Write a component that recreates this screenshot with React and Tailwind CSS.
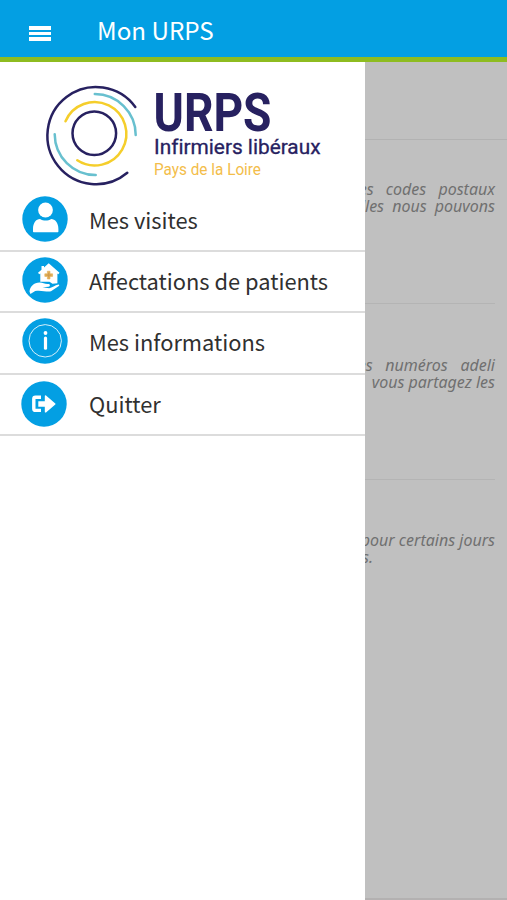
import React from "react";

function Badge({ className = "", children }) {
  return (
    <svg className={`h-[46px] w-[46px] shrink-0 ${className}`} viewBox="0 0 46 46" fill="none">
      <circle cx="23" cy="23" r="22.7" fill="#039fe3" />
      {children}
    </svg>
  );
}

function Logo() {
  return (
    <svg className="block h-[129px] w-[365px]" viewBox="0 62 365 129" fill="none">
      <g strokeWidth="2.5" strokeLinecap="round">
        <path d="M135.3 107A48.6 48.6 0 1 0 127.3 172.8" stroke="#272160" />
        <circle cx="94.3" cy="133.3" r="21.8" stroke="#272160" />
        <path d="M65.5 121.3A31.7 31.7 0 1 1 77.3 160.3" stroke="#f5ce2b" />
        <path d="M94.8 94A41 41 0 0 1 135.7 135" stroke="#68c0cf" />
        <path d="M54.7 134.2A41 41 0 0 0 95.7 175" stroke="#68c0cf" />
      </g>
      <text x="153.5" y="130.5" textLength="118" fontFamily="Roboto" fontSize="53" fontWeight="700" lengthAdjust="spacingAndGlyphs" fill="#272160">URPS</text>
      <text x="154" y="154.2" textLength="166.5" fontFamily="Roboto" fontSize="20" fontWeight="400" lengthAdjust="spacingAndGlyphs" fill="#272160" stroke="#272160" strokeWidth="0.3" className="[font-variant-ligatures:none]">Infirmiers libéraux</text>
      <text x="154" y="174.5" textLength="107" fontFamily="Roboto" fontSize="16" lengthAdjust="spacingAndGlyphs" fill="#f3bd4a">Pays de la Loire</text>
    </svg>
  );
}

function MenuItem({ icon, label }) {
  return (
    <li className="flex h-[61.2px] items-start border-b-2 border-[#dcdcdc] pl-[22px]">
      <div className="w-[67px] pt-[5px]">{icon}</div>
      <span className="pt-[11px] text-[21.85px] leading-[36px] whitespace-nowrap text-[#303030]">{label}</span>
    </li>
  );
}

function Line({ className = "", children }) {
  return (
    <div className={`flex h-[17.3px] justify-end whitespace-nowrap leading-[17.3px] ${className}`}>
      <span>{children}</span>
    </div>
  );
}

export default function App() {
  return (
    <div className="flex h-[900px] w-[507px] flex-col overflow-hidden bg-white font-['Noto_Sans_CJK_SC',sans-serif]">
      <header className="flex h-[62px] shrink-0 items-start border-b-[5px] border-[#8ebc20] bg-[#039fe3] pl-[29px] text-white">
        <div className="mt-[26px] flex w-[22px] flex-col gap-[2px]">
          <div className="h-[3.5px] bg-white" />
          <div className="h-[3.5px] bg-white" />
          <div className="h-[3.5px] bg-white" />
        </div>
        <h1 className="ml-[46px] pt-[12px] text-[24.2px] leading-[36px]">Mon URPS</h1>
      </header>

      <div className="flex min-h-0 flex-1">
        <nav className="w-[365px] shrink-0 bg-white">
          <Logo />
          <ul>
            <MenuItem
              label="Mes visites"
              icon={
                <Badge>
                  <circle cx="23.5" cy="14" r="7.4" fill="#fff" />
                  <path d="M11 35.6V33C11 27 14 23 18 23C21.5 25 26 25 29.2 23C33.2 23 36.4 27 36.4 33V35.6Q36.4 36.2 35.7 36.2H11.7Q11 36.2 11 35.6Z" fill="#fff" />
                </Badge>
              }
            />
            <MenuItem
              label="Affectations de patients"
              icon={
                <Badge>
                  <path d="M26.7 6.3L37.5 15.8L36.3 17.3L35.4 16.5V26.2L30.5 26.8L27.5 24.8H18.3V16.5L17.2 17.3L16 15.8L19.5 12.8V9H22V10.5Z" fill="#fff" />
                  <path d="M25.4 14.2H28V16.8H30.6V19.4H28V22H25.4V19.4H22.8V16.8H25.4Z" fill="#e2ae57" stroke="#e2ae57" strokeWidth="0.6" />
                  <path d="M26.7 16V20.2M24.6 18.1H28.8" stroke="#c9954b" strokeWidth="0.8" />
                  <path d="M7.5 34.5C8 29.5 12 25.3 18 25.5C21 25.5 23 27.5 26.5 27C28.3 27 28.5 29.5 26.5 29.8L20.5 30.2L27.2 31.2C30 30.8 33 28.2 36.5 27.6C37.6 27.7 37.5 28.7 36.5 29.2L29 34.2C25 35.3 19 32.7 13.2 34L8.4 37Z" fill="#fff" />
                </Badge>
              }
            />
            <MenuItem
              label="Mes informations"
              icon={
                <Badge>
                  <circle cx="23.2" cy="22.8" r="16.2" stroke="#d4effb" strokeWidth="1" />
                  <circle cx="23.5" cy="15" r="1.9" fill="#fff" />
                  <path d="M23.5 20V30.2" stroke="#fff" strokeWidth="3.2" strokeLinecap="round" />
                </Badge>
              }
            />
            <MenuItem
              label="Quitter"
              icon={
                <Badge className="-ml-[1.5px] mt-[1px]">
                  <path d="M20 16.3H14.5Q12.8 16.3 12.8 18V27.7Q12.8 29.4 14.5 29.4H20" stroke="#fff" strokeWidth="3.4" />
                  <path d="M17.3 20.3H23.8V15Q24 13.8 25 14.6L34.3 22.4Q34.8 23 34.3 23.6L25 31.4Q24 32 23.8 30.9V25.8H17.3Z" fill="#fff" />
                </Badge>
              }
            />
          </ul>
        </nav>

        <main className="flex min-w-0 flex-1 flex-col overflow-hidden border-b-2 border-[#b3b1b1] bg-[#c0c0c0] font-['Noto_Sans',sans-serif] text-[16px] text-[#707070] italic">
          <div className="h-[78px] shrink-0 border-b border-[#b2b2b2]" />
          <section className="mr-[12px] h-[164px] shrink-0 border-b border-[#b4b4b4] pt-[41px]">
            <Line className="[word-spacing:8px]">es codes postaux</Line>
            <Line className="[word-spacing:4px]">lles nous pouvons</Line>
          </section>
          <section className="mr-[12px] h-[176px] shrink-0 border-b border-[#b4b4b4] pt-[53px]">
            <Line className="[word-spacing:8.5px]">es numéros adeli</Line>
            <Line>vous partagez les</Line>
          </section>
          <section className="mr-[12px] pt-[52px]">
            <Line>pour certains jours</Line>
            <div className="-ml-[3px] leading-[17.3px]">s.</div>
          </section>
        </main>
      </div>
    </div>
  );
}
